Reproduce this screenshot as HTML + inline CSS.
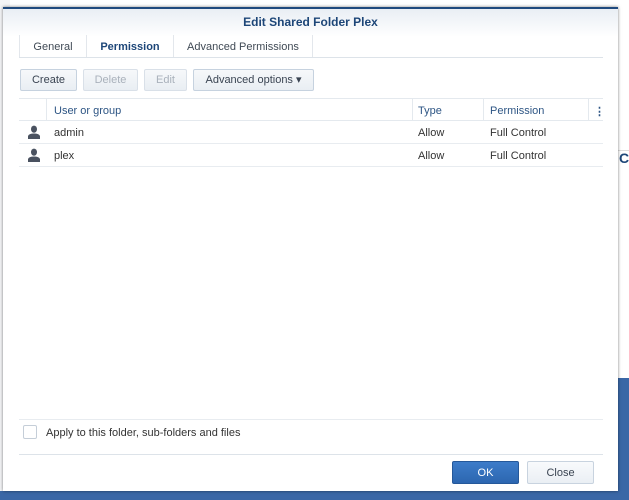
<!DOCTYPE html>
<html><head><style>
*{box-sizing:border-box;margin:0;padding:0}
body{width:629px;height:500px;overflow:hidden;position:relative;background:#3a67a6;font-family:"Liberation Sans",sans-serif;font-size:11px;color:#333}
.bgw{position:absolute;left:0;top:0;width:629px;height:378px;background:#fff}
.bgl{position:absolute;left:0;top:0;width:10px;height:491px;background:#f3f4f6}
.dlg{position:absolute;left:3px;top:7px;width:615px;height:484px;background:#fff;border-top:2px solid #1f4a7e;box-shadow:0 0 3px rgba(0,0,0,.5)}
.title{position:absolute;left:0;top:0;width:100%;height:28px;background:linear-gradient(#e9eef4,#fff);text-align:center;font-weight:bold;font-size:12px;color:#1d4678;line-height:27px}
.abs{position:absolute}
.tabs{left:16px;top:26px;width:584px;height:23px;border-bottom:1px solid #dde3e9}
.tab{position:absolute;top:0;height:22px;line-height:24px;text-align:center;border-left:1px solid #e3e7ec;color:#404a55}
.btn{position:absolute;top:60px;height:22px;border:1px solid #c6d2df;border-radius:2px;background:linear-gradient(#f6f8fa,#e9eef3);text-align:center;line-height:21px;color:#3a4452}
.dis{color:#a9b1bb;border-color:#d9e0e8}
.hdr{left:16px;top:89px;width:584px;height:23px;border-top:1px solid #e4e9ee;border-bottom:1px solid #e4e9ee;color:#2d5584}
.hdr span,.row span{position:absolute;top:6px}
.col{position:absolute;top:0;height:21px;border-left:1px solid #e4e9ee}
.row{left:16px;width:584px;height:23px;border-bottom:1px solid #e8ecf0}
.usr{position:absolute;left:8px;top:4px}
</style></head><body>
<div class="bgw"></div><div class="bgl"></div>
<div class="abs" style="left:618px;top:150px;width:11px;height:1px;background:#ddd"></div>
<div class="abs" style="left:619px;top:150px;font-size:14px;font-weight:bold;color:#1d4678">C</div>
<div class="dlg">
<div class="title">Edit Shared Folder Plex</div>
<div class="abs tabs">
<div class="tab" style="left:0;width:67px;border-left:1px solid #e3e7ec">General</div>
<div class="tab" style="left:67px;width:87px;font-weight:bold;color:#1d4678">Permission</div>
<div class="tab" style="left:154px;width:139px">Advanced Permissions</div>
<div class="tab" style="left:293px;width:1px"></div>
</div>
<div class="btn" style="left:17px;width:57px">Create</div>
<div class="btn dis" style="left:80px;width:55px">Delete</div>
<div class="btn dis" style="left:141px;width:43px">Edit</div>
<div class="btn" style="left:190px;width:121px">Advanced options ▾</div>
<div class="abs hdr">
<div class="col" style="left:27px"></div><span style="left:35px">User or group</span>
<div class="col" style="left:393px"></div><span style="left:399px">Type</span>
<div class="col" style="left:464px"></div><span style="left:471px">Permission</span>
<div class="col" style="left:569px"></div><span style="left:575px;font-weight:bold">⋮</span>
</div>
<div class="abs row" style="top:112px"><svg class="usr" width="14" height="14" viewBox="0 0 14 14"><ellipse cx="7" cy="4.2" rx="3" ry="3.6" fill="#4a5260"/><path d="M1 14 L1 11 Q2 8.5 7 8.5 Q12 8.5 13 11 L13 14Z" fill="#4a5260"/></svg><span style="left:35px">admin</span><span style="left:399px">Allow</span><span style="left:471px">Full Control</span></div>
<div class="abs row" style="top:135px"><svg class="usr" width="14" height="14" viewBox="0 0 14 14"><ellipse cx="7" cy="4.2" rx="3" ry="3.6" fill="#4a5260"/><path d="M1 14 L1 11 Q2 8.5 7 8.5 Q12 8.5 13 11 L13 14Z" fill="#4a5260"/></svg><span style="left:35px">plex</span><span style="left:399px">Allow</span><span style="left:471px">Full Control</span></div>
<div class="abs" style="left:16px;top:410px;width:584px;height:1px;background:#e8ecf0"></div>
<div class="abs" style="left:20px;top:416px;width:14px;height:14px;border:1px solid #c5ced8;border-radius:2px"></div>
<div class="abs" style="left:43px;top:418px">Apply to this folder, sub-folders and files</div>
<div class="abs" style="left:16px;top:445px;width:584px;height:1px;background:#dde3e9"></div>
<div class="abs" style="left:449px;top:452px;width:67px;height:23px;background:linear-gradient(#3d7cc9,#2c66b0);border:1px solid #25589a;border-radius:2px;color:#fff;text-align:center;line-height:22px">OK</div>
<div class="abs" style="left:524px;top:452px;width:67px;height:23px;background:linear-gradient(#f8fafc,#eaeff4);border:1px solid #c8d3df;border-radius:2px;text-align:center;line-height:22px;color:#3a4452">Close</div>
</div>
</body></html>
